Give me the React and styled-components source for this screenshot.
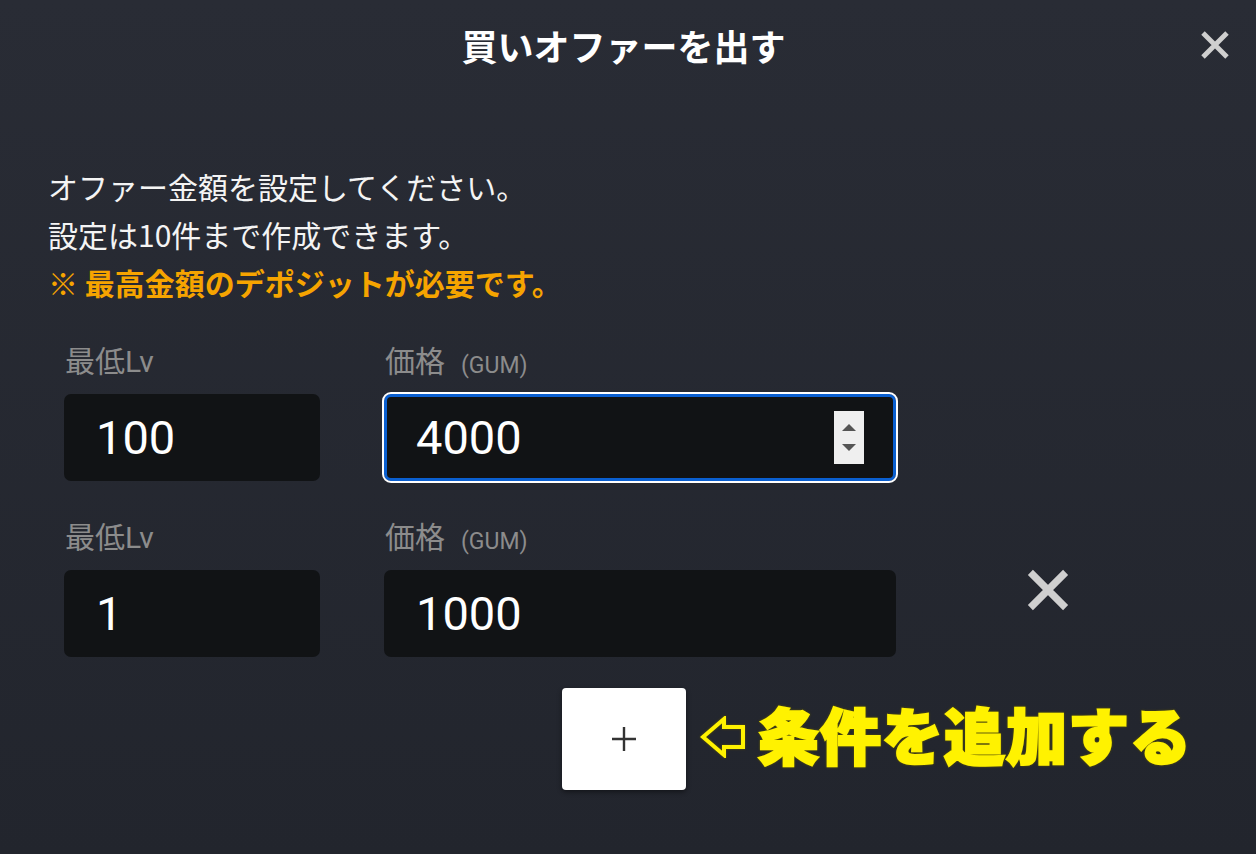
import styled, { createGlobalStyle } from "styled-components"

const GlobalStyle = createGlobalStyle`
  html, body {
    margin: 0;
    padding: 0;
    background: #252831;
  }
  * { box-sizing: border-box; }
`

const Modal = styled.div`
  width: 100%;
  height: 854px;
  overflow: hidden;
  background: linear-gradient(180deg, #292c35 0%, #22252d 100%);
  color: #fff;
  font-family: Roboto, "Noto Sans CJK JP", sans-serif;
`

const Header = styled.header`
  display: grid;
  grid-template-columns: 1fr auto 1fr;
  align-items: center;
  height: 90px;
  padding: 0 26px 0 17px;
`

const Title = styled.h1`
  grid-column: 2;
  margin: 0;
  font-size: 36px;
  font-weight: 700;
  font-family: "Noto Sans CJK JP", sans-serif;
`

const IconButton = styled.button`
  justify-self: end;
  align-self: center;
  display: flex;
  padding: 0;
  border: none;
  background: none;
  cursor: pointer;
`

const Body = styled.div`
  padding: 72px 0 0 48px;
`

const Intro = styled.p`
  margin: 0;
  font-size: 30px;
  line-height: 48px;
  font-family: "Noto Sans CJK JP", sans-serif;
  color: #f4f4f4;
`

const Warn = styled.span`
  color: #f6a400;
  font-weight: 700;
`

const Rows = styled.div`
  display: flex;
  flex-direction: column;
  gap: 37px;
  margin-top: 36px;
  padding-left: 16px;
`

const Row = styled.div`
  display: grid;
  grid-template-columns: 256px 512px 110px;
  column-gap: 64px;
  align-items: start;
`

const Group = styled.div`
  display: flex;
  flex-direction: column;
  gap: 12px;
`

const Label = styled.div`
  height: 40px;
  display: flex;
  align-items: center;
  font-size: 30px;
  line-height: 40px;
  color: #8c8c8c;
  padding-left: 1px;
`

const Unit = styled.span`
  font-family: Roboto, sans-serif;
  font-size: 23px;
  line-height: 1;
  margin: 6px 0 0 16px;
`

const Field = styled.div`
  display: flex;
  align-items: center;
  justify-content: space-between;
  height: 87px;
  padding: 0 29px 0 ${(p) => (p.$focus ? "29px" : "32px")};
  background: #111315;
  border-radius: 7px;
  border: ${(p) => (p.$focus ? "3px solid #0a5fd0" : "none")};
  outline: ${(p) => (p.$focus ? "2px solid #fff" : "none")};
  font-family: Roboto, sans-serif;
  font-size: 47px;
  color: #fff;
`

const Spinner = styled.div`
  display: flex;
  flex-direction: column;
  justify-content: space-around;
  align-items: center;
  width: 30px;
  height: 53px;
  background: #efefef;
  padding: 6px 0;
`

const Tri = styled.div`
  width: 0;
  height: 0;
  border-left: 7px solid transparent;
  border-right: 7px solid transparent;
  ${(p) => (p.$down ? "border-top: 7px solid #555;" : "border-bottom: 7px solid #555;")}
`

const DeleteSlot = styled.div`
  grid-column: 3;
  justify-self: end;
  align-self: center;
  display: flex;
  padding-top: 5px;
`

const AddRow = styled.div`
  display: flex;
  align-items: center;
  gap: 14px;
  margin-top: 31px;
  padding-left: 514px;
`

const AddButton = styled.button`
  width: 124px;
  height: 102px;
  display: flex;
  align-items: center;
  justify-content: center;
  border: none;
  border-radius: 4px;
  background: #fff;
  box-shadow: 0 2px 5px rgba(0, 0, 0, 0.45);
  cursor: pointer;
`

const Note = styled.div`
  display: flex;
  align-items: center;
  gap: 12px;
  margin-top: -4px;
  filter: drop-shadow(0 0 0.8px #5e5600);
`

const NoteText = styled.span`
  font-family: "Noto Sans CJK JP", sans-serif;
  font-weight: 900;
  font-size: 61px;
  line-height: 62px;
  color: #fff200;
  -webkit-text-stroke: 2.5px #fff200;
  letter-spacing: 1px;
  margin-top: -6px;
`

const Cross = ({ size, stroke }) => (
  <svg width={size} height={size} viewBox="0 0 40 40">
    <path d="M4 4 L36 36 M36 4 L4 36" stroke="#cfcfcf" strokeWidth={stroke} fill="none" />
  </svg>
)

const rows = [
  { lv: "100", price: "4000", focus: true },
  { lv: "1", price: "1000", removable: true },
]

const App = () => {
  return (
    <Modal>
      <GlobalStyle />
      <Header>
        <Title>買いオファーを出す</Title>
        <IconButton>
          <Cross size={30} stroke={6.5} />
        </IconButton>
      </Header>
      <Body>
        <Intro>
          オファー金額を設定してください。
          <br />
          設定は10件まで作成できます。
          <br />
          <Warn>※ 最高金額のデポジットが必要です。</Warn>
        </Intro>
        <Rows>
          {rows.map((r, i) => (
            <Row key={i}>
              <Group>
                <Label>最低Lv</Label>
                <Field>{r.lv}</Field>
              </Group>
              <Group>
                <Label>
                  価格<Unit>(GUM)</Unit>
                </Label>
                <Field $focus={r.focus}>
                  <span>{r.price}</span>
                  {r.focus && (
                    <Spinner>
                      <Tri />
                      <Tri $down />
                    </Spinner>
                  )}
                </Field>
              </Group>
              {r.removable && (
                <DeleteSlot>
                  <Cross size={44} stroke={6.5} />
                </DeleteSlot>
              )}
            </Row>
          ))}
        </Rows>
        <AddRow>
          <AddButton>
            <svg width="26" height="26" viewBox="0 0 26 26">
              <path d="M13 1 V25 M1 13 H25" stroke="#333" strokeWidth="2.4" />
            </svg>
          </AddButton>
          <Note>
            <svg width="46" height="42" viewBox="0 0 46 42">
              <polygon
                points="3,21 24,3 24,11 43,11 43,31 24,31 24,39"
                fill="none"
                stroke="#fff200"
                strokeWidth="4"
              />
            </svg>
            <NoteText>条件を追加する</NoteText>
          </Note>
        </AddRow>
      </Body>
    </Modal>
  )
}

export default App
